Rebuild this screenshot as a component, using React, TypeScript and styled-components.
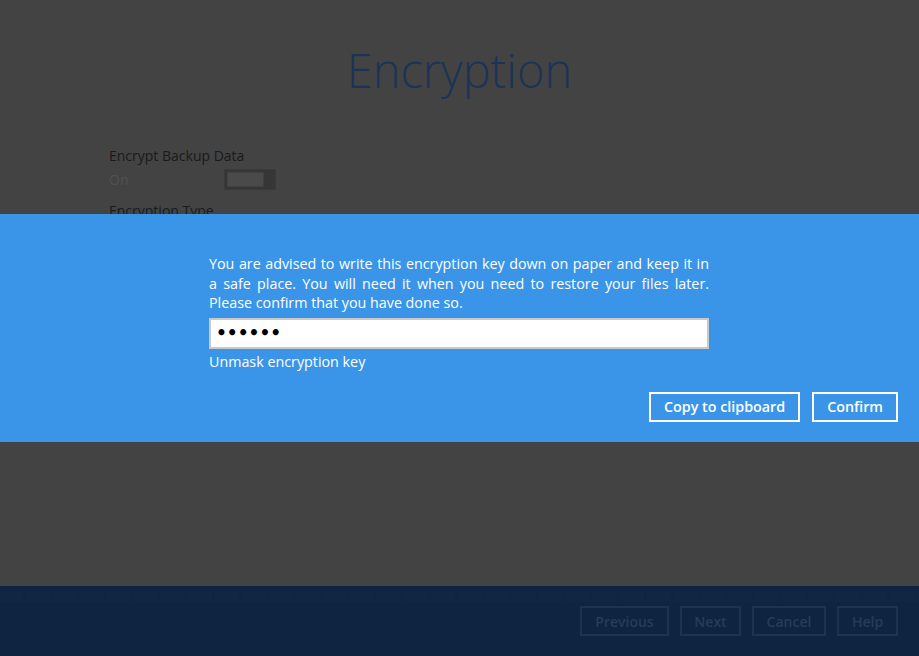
import * as React from "react";
import styled, { createGlobalStyle } from "styled-components";

const GlobalStyle = createGlobalStyle`
  html, body {
    margin: 0;
    padding: 0;
    background: #434343;
  }
  body {
    font-family: "Open Sans", "Liberation Sans", sans-serif;
  }
`;

const Screen = styled.div`
  width: 919px;
  height: 656px;
  display: flex;
  flex-direction: column;
  overflow: hidden;
`;

const Main = styled.div`
  position: relative;
  flex: 1;
  background: #434343;
`;

const Title = styled.h1`
  margin: 0;
  padding-top: 38px;
  text-align: center;
  font-size: 47px;
  font-weight: 300;
  line-height: 64px;
  color: #1b3455;
`;

const Form = styled.div`
  padding: 44px 0 0 109px;
  display: flex;
  flex-direction: column;
`;

const Label = styled.div`
  font-size: 14px;
  line-height: 19px;
  color: #1a1a1a;
`;

const SwitchRow = styled.div`
  display: flex;
  align-items: center;
  height: 28px;
  margin-bottom: 8px;
`;

const SwitchText = styled.span`
  width: 115px;
  font-size: 14px;
  color: #515151;
`;

const Toggle = styled.div`
  box-sizing: border-box;
  width: 52px;
  height: 21px;
  padding: 2px;
  border: 1px solid #3a3a3a;
  background: #363636;
  display: flex;
`;

const ToggleKnob = styled.span`
  display: block;
  box-sizing: border-box;
  width: 37px;
  height: 15px;
  background: #4a4a4a;
  border: 1px solid #404040;
`;

const Dialog = styled.div`
  position: absolute;
  top: 214px;
  left: 0;
  right: 0;
  height: 228px;
  background: #3a95e8;
  display: flex;
  flex-direction: column;
`;

const DialogBody = styled.div`
  width: 500px;
  margin: 40px 0 0 209px;
  color: #ffffff;
`;

const Message = styled.p`
  margin: 0;
  font-size: 14.3px;
  line-height: 19.5px;
  text-align: justify;
`;

const KeyInput = styled.input`
  box-sizing: border-box;
  display: block;
  width: 500px;
  height: 31px;
  margin-top: 5px;
  padding: 0 5px;
  border: 2px solid #c9c9c9;
  background: #fff;
  font-size: 17px;
  font-weight: bold;
  font-family: "DejaVu Sans", sans-serif;
  color: #000;
  outline: none;
`;

const Unmask = styled.div`
  margin-top: 3px;
  font-size: 14.3px;
  line-height: 19px;
`;

const DialogActions = styled.div`
  display: flex;
  justify-content: flex-end;
  gap: 12px;
  padding: 21px 21px 0 0;
`;

const DialogButton = styled.button`
  box-sizing: border-box;
  height: 30px;
  padding: 0 13px;
  border: 2px solid #ffffff;
  background: transparent;
  color: #ffffff;
  font-family: "Open Sans", sans-serif;
  font-size: 14.3px;
  font-weight: 600;
`;

const Footer = styled.div`
  position: relative;
  height: 70px;
  background: #0f2440;
  display: flex;
  justify-content: flex-end;
  align-items: flex-start;
  gap: 11px;
  padding: 20px 21px 0 0;
  box-sizing: border-box;
`;

const FooterStrip = styled.div`
  position: absolute;
  top: 6px;
  left: 0;
  right: 0;
  height: 10px;
  background: repeating-linear-gradient(
    90deg,
    #112643 0px,
    #112643 22px,
    #0f2440 24px,
    #112643 27px
  );
`;

const FooterButton = styled.button<{ $w: number }>`
  position: relative;
  box-sizing: border-box;
  width: ${(p) => p.$w}px;
  height: 30px;
  border: 2px solid #1d3351;
  background: transparent;
  color: #263c5a;
  font-family: "Open Sans", sans-serif;
  font-size: 14px;
  font-weight: 600;
`;

const App: React.FC = () => {
  return (
    <Screen>
      <GlobalStyle />
      <Main>
        <Title>Encryption</Title>
        <Form>
          <Label>Encrypt Backup Data</Label>
          <SwitchRow>
            <SwitchText>On</SwitchText>
            <Toggle>
              <ToggleKnob />
            </Toggle>
          </SwitchRow>
          <Label>Encryption Type</Label>
        </Form>
        <Dialog>
          <DialogBody>
            <Message>
              You are advised to write this encryption key down on paper and
              keep it in a safe place. You will need it when you need to
              restore your files later. Please confirm that you have done so.
            </Message>
            <KeyInput type="password" defaultValue="secret" readOnly />
            <Unmask>Unmask encryption key</Unmask>
          </DialogBody>
          <DialogActions>
            <DialogButton>Copy to clipboard</DialogButton>
            <DialogButton>Confirm</DialogButton>
          </DialogActions>
        </Dialog>
      </Main>
      <Footer>
        <FooterStrip />
        <FooterButton $w={89}>Previous</FooterButton>
        <FooterButton $w={61}>Next</FooterButton>
        <FooterButton $w={74}>Cancel</FooterButton>
        <FooterButton $w={61}>Help</FooterButton>
      </Footer>
    </Screen>
  );
};

export default App;
